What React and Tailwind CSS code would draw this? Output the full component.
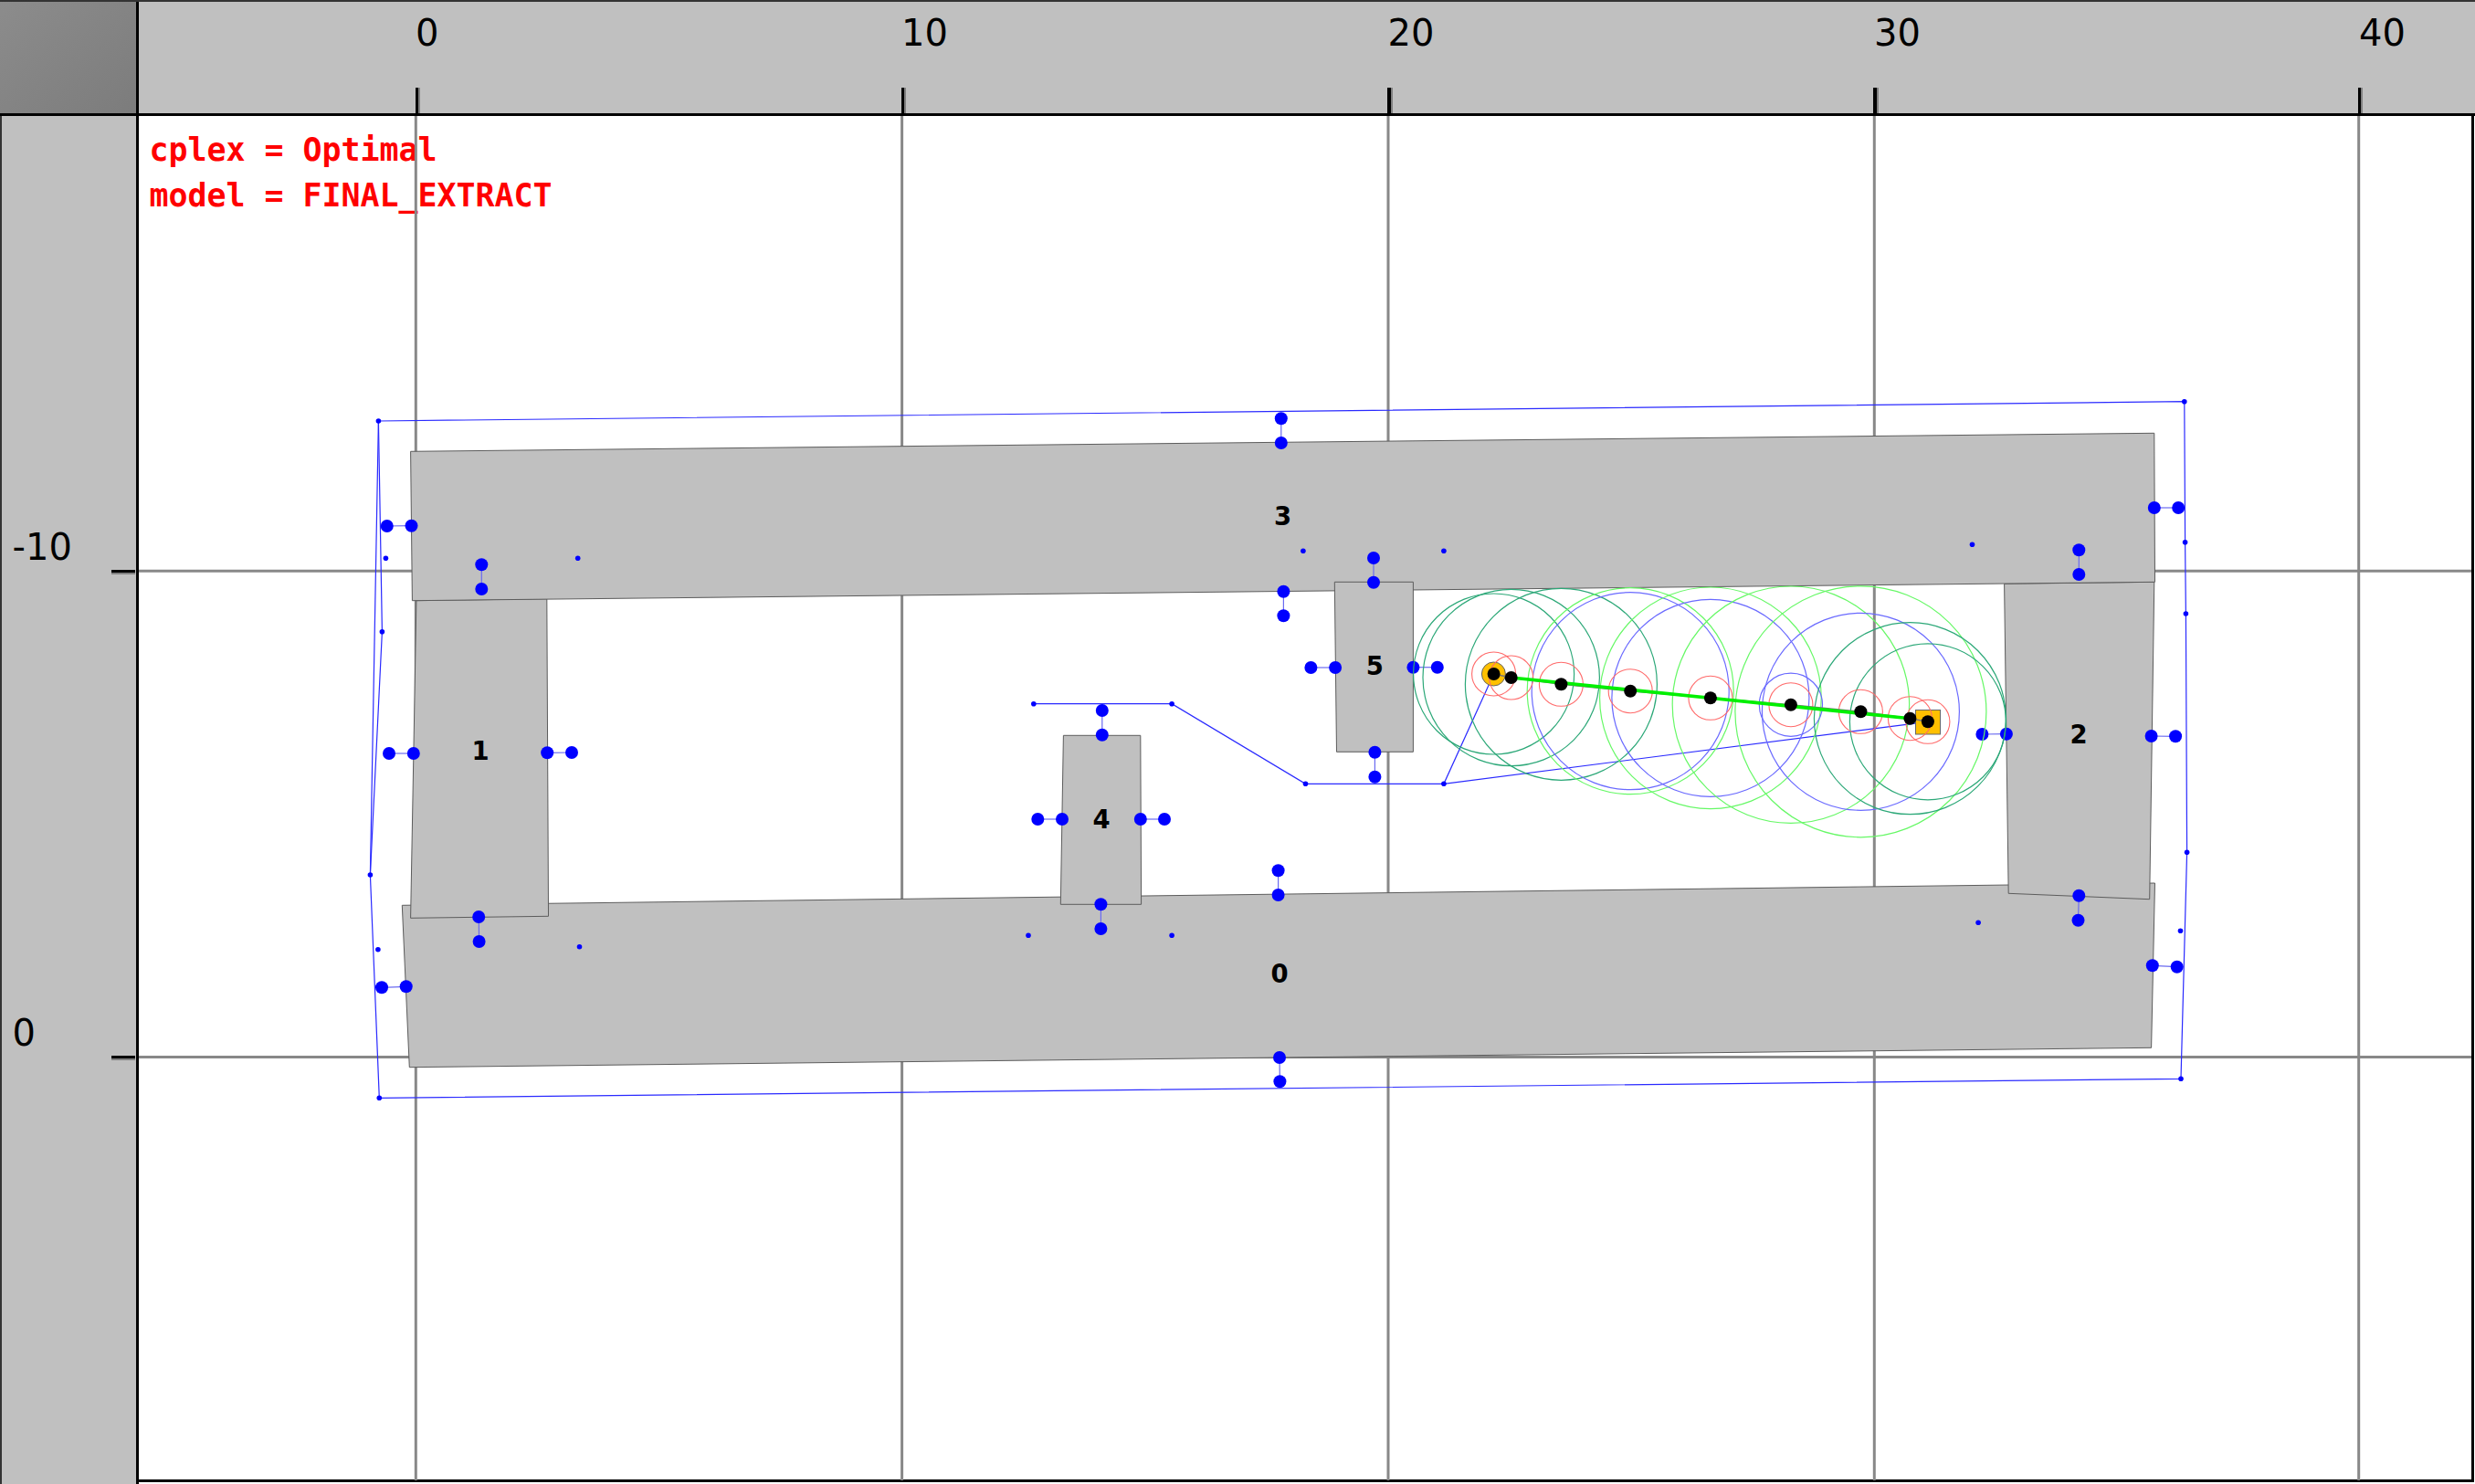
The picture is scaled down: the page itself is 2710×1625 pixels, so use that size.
import React from "react";

const topTicks = [
  { label: "0", tick: "left-[302.5px]", text: "left-[303px]" },
  { label: "10", tick: "left-[834.5px]", text: "left-[835px]" },
  { label: "20", tick: "left-[1367px]", text: "left-[1367.5px]" },
  { label: "30", tick: "left-[1899px]", text: "left-[1900px]" },
  { label: "40", tick: "left-[2429.5px]", text: "left-[2431px]" },
];

const vGrid = [455.3, 987.6, 1520, 2052.3, 2582.7];
const hGrid = [625.3, 1157.6];

const rooms = [
  "440.3,991.3 2359.5,967 2355.6,1147.3 448.3,1168.7",
  "455.9,657.7 598.8,655.7 600.5,1003.3 449.6,1005.3",
  "2194.6,639.3 2358.8,637.3 2353.7,984.7 2199.2,978.3",
  "449.6,494.3 2358.8,474.3 2359.5,637.3 451.4,657.7",
  "1164.4,805.3 1248.8,805.3 1249.6,990.3 1161.3,990.3",
  "1461.3,637.3 1547.4,637.3 1547.4,823.3 1463.5,823.3",
];

const roomLabels = [
  { id: "0", x: 1401, y: 1076 },
  { id: "1", x: 526, y: 832 },
  { id: "2", x: 2276, y: 813.5 },
  { id: "3", x: 1404.5, y: 574.5 },
  { id: "4", x: 1206, y: 907 },
  { id: "5", x: 1505.4, y: 738.5 },
];

// doors: the two handles on either side of a wall
const doors = [
  [423.75, 576, 450.5, 575.7],
  [527.3, 618.3, 527.3, 645],
  [426, 825, 452.8, 825],
  [599.2, 824.3, 626, 824],
  [524.2, 1004, 524.6, 1031],
  [418, 1081.3, 444.7, 1080.3],
  [1402.8, 458.3, 1402.8, 485],
  [1504, 611, 1504, 637.7],
  [1405.4, 647.7, 1405.4, 674.3],
  [1435.4, 731, 1462.1, 731],
  [1547.4, 730.7, 1573.8, 730.7],
  [1505.4, 823.7, 1505.4, 850.7],
  [1206.8, 778, 1206.8, 804.7],
  [1136.3, 897, 1163, 897],
  [1248.8, 897, 1275, 897],
  [1399.6, 953.3, 1399.6, 980],
  [1205.4, 990.3, 1205.4, 1017],
  [1401, 1158, 1401.4, 1184.3],
  [2358.8, 556, 2385.2, 556],
  [2276.3, 602.3, 2276.3, 629],
  [2170.4, 804, 2196.9, 803.7],
  [2355.6, 806, 2382.1, 806.3],
  [2276.3, 980.7, 2275.5, 1007.7],
  [2356.8, 1057.3, 2383.7, 1058.7],
];

const smallDots = [
  [414.4, 461], [422.4, 611.3], [632.7, 611.3], [418.4, 691.7],
  [405.4, 958], [413.9, 1039.7], [634.5, 1036.7], [415.3, 1202.3],
  [1426.9, 603.3], [1580.9, 603.3], [1131.8, 770.7], [1283.1, 770.7],
  [1429.5, 858.3], [1580.9, 858.3], [1126, 1024.3], [1283.1, 1024.3],
  [2391.8, 439.7], [2159.5, 596.3], [2392.6, 593.7], [2393.4, 672],
  [2394.6, 933.3], [2166.1, 1010.3], [2387.5, 1019.3], [2388, 1181.3],
];

const bluePaths = [
  "414.4,461 2391.8,439.7 2392.6,593.7 2393.4,672 2394.6,933.3 2388,1181.3 415.3,1202.3 405.4,958 414.4,461",
  "414.4,461 418.4,691.7 405.4,958",
  "1131.8,770.7 1283.1,770.7 1429.5,858.3 1580.9,858.3 1635.6,738",
  "1580.9,858.3 2110.9,790.3",
];

const waypoints = [
  [1635.6, 738],
  [1654.7, 742],
  [1709.4, 749.3],
  [1785.2, 756.7],
  [1872.9, 764.3],
  [1960.9, 771.7],
  [2037.4, 779.3],
  [2091.4, 786.7],
  [2110.9, 790.3],
];

const TEAL = "#2ca878";
const GREEN = "#66f866";
const BLUE = "#6a6aff";

const reach = [
  { at: 0, r: 88, color: TEAL },
  { at: 1, r: 96.7, color: TEAL },
  { at: 2, r: 105, color: TEAL },
  { at: 3, r: 113, color: GREEN },
  { at: 3, r: 108, color: BLUE },
  { at: 4, r: 121.3, color: GREEN },
  { at: 4, r: 108, color: BLUE },
  { at: 5, r: 129.7, color: GREEN },
  { at: 5, r: 34.6, color: BLUE },
  { at: 6, r: 137.5, color: GREEN },
  { at: 6, r: 108, color: BLUE },
  { at: 7, r: 105, color: TEAL },
  { at: 8, r: 85.5, color: TEAL },
];

const Diagram = () => (
  <svg
    className="absolute left-0 top-0 font-['DejaVu_Sans',sans-serif]"
    width="2554"
    height="1494"
    viewBox="152 127 2554 1494"
  >
    {vGrid.map((x) => (
      <line key={x} x1={x} y1="127" x2={x} y2="1621" stroke="#888888" strokeWidth="3" />
    ))}
    {hGrid.map((y) => (
      <line key={y} x1="152" y1={y} x2="2706" y2={y} stroke="#888888" strokeWidth="3" />
    ))}

    {rooms.map((points) => (
      <polygon key={points} points={points} fill="#c0c0c0" stroke="#5c5c5c" strokeWidth="1" />
    ))}
    {roomLabels.map((room) => (
      <text key={room.id} x={room.x} y={room.y} textAnchor="middle" fontSize="27.5" fontWeight="700" fill="#000000">
        {room.id}
      </text>
    ))}

    {bluePaths.map((points) => (
      <polyline key={points} points={points} fill="none" stroke="#2a2aff" strokeWidth="1.2" />
    ))}
    {doors.map(([x1, y1, x2, y2]) => (
      <g key={`${x1}-${y1}`}>
        <line x1={x1} y1={y1} x2={x2} y2={y2} stroke="#6a6af0" strokeWidth="1.2" />
        <circle cx={x1} cy={y1} r="7" fill="#0000ff" />
        <circle cx={x2} cy={y2} r="7" fill="#0000ff" />
      </g>
    ))}
    {smallDots.map(([x, y]) => (
      <circle key={`${x}-${y}`} cx={x} cy={y} r="2.8" fill="#0000ff" />
    ))}

    <circle cx="1635.4" cy="738" r="13" fill="#ffc000" stroke="#666666" strokeWidth="1" />
    <rect x="2097.5" y="777.5" width="27" height="26.5" fill="#ffc000" stroke="#666666" strokeWidth="1" />

    {reach.map((c) => (
      <circle
        key={`${c.at}-${c.r}`}
        cx={waypoints[c.at][0]}
        cy={waypoints[c.at][1]}
        r={c.r}
        fill="none"
        stroke={c.color}
        strokeWidth="1.2"
      />
    ))}
    {waypoints.map(([x, y]) => (
      <circle key={x} cx={x} cy={y} r="24" fill="none" stroke="#ff6a6a" strokeWidth="1.1" />
    ))}

    <polyline
      points={waypoints.map((p) => p.join(",")).join(" ")}
      fill="none"
      stroke="#777777"
      strokeWidth="1.4"
    />
    <line x1="1654.7" y1="742" x2="2091.4" y2="786.7" stroke="#00f000" strokeWidth="3.6" />
    {waypoints.map(([x, y]) => (
      <circle key={x} cx={x} cy={y} r="7" fill="#000000" />
    ))}
  </svg>
);

const App = () => {
  return (
    <div className="flex h-[1625px] w-[2710px] flex-col overflow-hidden bg-white font-['DejaVu_Sans',sans-serif] text-[40px] leading-[40px] text-black">
      <div className="flex h-[127px] shrink-0 border-t-2 border-b-[3px] border-t-[#333333] border-b-black bg-[#c0c0c0]">
        <div className="h-full w-[152px] shrink-0 border-r-[3px] border-black bg-linear-to-br from-[#8c8c8c] to-[#7c7c7c]" />
        <div className="relative flex-1">
          {topTicks.map((t) => (
            <React.Fragment key={t.label}>
              <span className={`absolute top-[14px] ${t.text}`}>{t.label}</span>
              <div className={`absolute bottom-0 h-[28px] w-[5.5px] border-r-[2.5px] border-[#808080] bg-black ${t.tick}`} />
            </React.Fragment>
          ))}
        </div>
      </div>

      <div className="flex min-h-0 flex-1">
        <div className="relative w-[152px] shrink-0 border-r-[3px] border-l-2 border-r-black border-l-[#333333] bg-[#c0c0c0]">
          <span className="absolute left-[11.5px] top-[452px]">-10</span>
          <div className="absolute left-[120px] top-[496.5px] h-[5.5px] w-[26px] border-b-[2.5px] border-[#808080] bg-black" />
          <span className="absolute left-[11.5px] top-[984px]">0</span>
          <div className="absolute left-[120px] top-[1028.5px] h-[5.5px] w-[26px] border-b-[2.5px] border-[#808080] bg-black" />
        </div>
        <div className="relative mr-px mb-0.5 flex-1 border-r-[3px] border-b-[3px] border-black bg-white">
          <div className="pl-[11.5px] pt-[11.5px] font-['DejaVu_Sans_Mono',monospace] text-[34.9px] font-bold leading-[50.7px] text-[#ff0000]">
            <p>cplex = Optimal</p>
            <p>model = FINAL_EXTRACT</p>
          </div>
          <Diagram />
        </div>
      </div>
    </div>
  );
};

export default App;
